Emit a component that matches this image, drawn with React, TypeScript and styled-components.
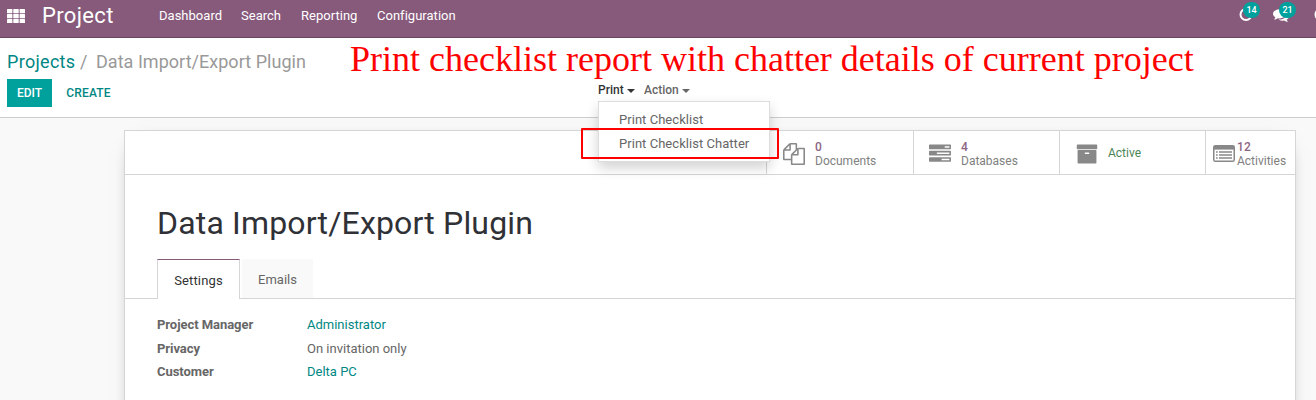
import React from "react";
import styled, { createGlobalStyle } from "styled-components";

const Global = createGlobalStyle`
  * { box-sizing: border-box; }
  html, body { margin: 0; height: 400px; overflow: hidden; }
  body { font: 13px/20px Roboto, "Liberation Sans", sans-serif; color: #666; background: #f9f9f9; }
`;
const Page = styled.div`position: relative; width: 1316px; height: 400px; overflow: hidden;`;

const Navbar = styled.header`
  display: flex; height: 38px; padding: 0 0 6px 7px; align-items: center;
  background: #875a7b; border-bottom: 1px solid #68465f; color: #fff; overflow: hidden;
`;
const Brand = styled.div`margin-left: 17px; padding-top: 1px; width: 117px; font-size: 22px; letter-spacing: 0.35px; white-space: nowrap;`;
const Menu = styled.nav`display: flex; gap: 20px; flex: 1;`;
const MenuItem = styled.span<{ $w: number }>`width: ${p => p.$w}px; white-space: nowrap; letter-spacing: 0.02px;`;
const Systray = styled.div`display: flex; width: 77px; height: 32px; align-items: center;`;
const TrayItem = styled.div<{ $w: number }>`position: relative; top: -1px; width: ${p => p.$w}px; height: 16px; flex: none;`;
const Badge = styled.span<{ $left: number }>`
  position: absolute; left: ${p => p.$left}px; top: -5px; padding: 0 3.5px; height: 16px;
  border-radius: 8px; background: #00a09d; font-size: 9px; line-height: 16px; font-weight: 500;
`;

const ControlPanel = styled.section`height: 80px; background: #fff; border-bottom: 1px solid #ccc; padding: 12px 7px 0;`;
const Breadcrumb = styled.div`display: flex; height: 25px; font-size: 18px; line-height: 24px; letter-spacing: 0.03px; color: #999; white-space: nowrap;`;
const Crumb = styled.span`color: #008784; width: 73px; letter-spacing: 0.3px;`;
const Slash = styled.span`width: 16px;`;
const Actions = styled.div`display: flex; margin-top: 4px; align-items: flex-start;`;
const Button = styled.button<{ $primary?: boolean }>`
  height: 28px; padding: 0; width: ${p => (p.$primary ? 45 : 73)}px; border: 0;
  font: 500 12px/26px Roboto, sans-serif; text-transform: uppercase; letter-spacing: ${p => (p.$primary ? 0 : 0.2)}px;
  background: ${p => (p.$primary ? "#00a09d" : "transparent")}; color: ${p => (p.$primary ? "#fff" : "#008784")};
`;
const Sidebar = styled.div`position: relative; display: flex; margin-left: 473px; margin-top: 1px; font-size: 12px; font-weight: 500;`;
const Toggle = styled.span<{ $open?: boolean }>`
  display: flex; align-items: center; width: 46px; color: ${p => (p.$open ? "#333" : "#666")};
  &::after { content: ""; margin: 2px 0 0 3px; border: 4px solid transparent; border-top-color: currentColor; border-bottom: 0; }
`;
const Dropdown = styled.div`
  position: absolute; z-index: 2; left: 0; top: 21px; width: 172px; height: 61px; padding-top: 6px;
  background: #fff; border: 1px solid #ddd; box-shadow: 0 6px 12px rgba(0,0,0,.175);
  font-size: 13px; font-weight: 400; letter-spacing: 0.04px;
`;
const Option = styled.div`height: 24px; line-height: 24px; padding-left: 20px; white-space: nowrap;`;
const Caption = styled.div`
  position: absolute; z-index: 3; left: 350px; top: 39px; white-space: nowrap;
  color: #f00; font: 36px/40px "Liberation Serif", serif;
`;
const Highlight = styled.div`position: absolute; z-index: 4; left: 581px; top: 128px; width: 198px; height: 31px; border: 2px solid #f00; border-radius: 1px;`;

const Sheet = styled.main`
  margin: 12px 0 0 124px; width: 1172px; height: 300px; background: #fff;
  border: 1px solid #d5d5d5; box-shadow: 0 5px 20px -15px #000;
`;
const Stats = styled.div`display: flex; justify-content: flex-end; height: 44px; border-bottom: 1px solid #d5d5d5;`;
const Stat = styled.div<{ $w: number; $gap: number; $pad: number }>`
  display: flex; align-items: center; width: ${p => p.$w}px; padding-left: ${p => p.$pad}px; gap: ${p => p.$gap}px;
  border-left: 1px solid #d5d5d5; color: #888; svg { flex: none; position: relative; top: 1px; }
`;
const StatText = styled.div`font-size: 12px; line-height: 14px; padding-top: 2px; color: #808080;`;
const Value = styled.div`color: #8d6584; font-weight: 500; letter-spacing: 0.2px;`;
const Active = styled.span`color: #4c8456; font-size: 12px; padding-top: 1px;`;
const Title = styled.h1`margin: 28px 0 0 32px; height: 40px; font-size: 32px; line-height: 40px; letter-spacing: 0.17px; font-weight: 400; color: #2f3136; white-space: nowrap;`;
const Tabs = styled.div`display: flex; margin-top: 16px; height: 40px; padding-left: 32px; border-bottom: 1px solid #d5d5d5;`;
const Tab = styled.div<{ $active?: boolean }>`
  width: ${p => (p.$active ? 83 : 71)}px; height: ${p => (p.$active ? 40 : 39)}px; letter-spacing: ${p => (p.$active ? 0.15 : 0)}px;
  margin-right: 2px; text-align: center; line-height: ${p => (p.$active ? 42 : 41)}px;
  color: ${p => (p.$active ? "#333" : "#666")}; background: ${p => (p.$active ? "#fff" : "#f9f9f9")};
  border: ${p => (p.$active ? "1px solid #d5d5d5" : "0")}; border-top: ${p => (p.$active ? "1px solid #875a7b" : "0")}; border-bottom: 0;
`;
const Fields = styled.dl`display: grid; grid-template-columns: 150px auto; grid-auto-rows: 23.5px; margin: 14px 0 0 32px; line-height: 24px;`;
const Label = styled.dt`font-weight: 700; letter-spacing: -0.05px;`;
const Data = styled.dd<{ $link?: boolean }>`margin: 0; color: ${p => (p.$link ? "#008784" : "#666")};`;

const Glyph = ({ d, size }: { d: string; size: number }) => (
  <svg width={size} height={size} viewBox="0 0 1792 1792" fill="currentColor"><path d={d} /></svg>
);
const files = "M1696 384q40 0 68 28t28 68v1216q0 40-28 68t-68 28h-960q-40 0-68-28t-28-68v-288h-544q-40 0-68-28t-28-68v-672q0-40 20-88t48-76l408-408q28-28 76-48t88-20h416q40 0 68 28t28 68v328q68-40 128-40h416zm-544 213l-299 299h299v-299zm-640-384l-299 299h299v-299zm196 647l316-316v-416h-384v416q0 40-28 68t-68 28h-416v640h512v-256q0-40 20-88t48-76zm956 804v-1152h-384v416q0 40-28 68t-68 28h-416v640h896z";
const tasks = "M1024 1408h640v-128h-640v128zm-384-512h1024v-128h-1024v128zm640-512h384v-128h-384v128zm512 832v256q0 26-19 45t-45 19h-1664q-26 0-45-19t-19-45v-256q0-26 19-45t45-19h1664q26 0 45 19t19 45zm0-512v256q0 26-19 45t-45 19h-1664q-26 0-45-19t-19-45v-256q0-26 19-45t45-19h1664q26 0 45 19t19 45zm0-512v256q0 26-19 45t-45 19h-1664q-26 0-45-19t-19-45v-256q0-26 19-45t45-19h1664q26 0 45 19t19 45z";
const archive = "M1088 832q0-26-19-45t-45-19h-256q-26 0-45 19t-19 45 19 45 45 19h256q26 0 45-19t19-45zm576-192v960q0 26-19 45t-45 19h-1408q-26 0-45-19t-19-45v-960q0-26 19-45t45-19h1408q26 0 45 19t19 45zm64-448v256q0 26-19 45t-45 19h-1536q-26 0-45-19t-19-45v-256q0-26 19-45t45-19h1536q26 0 45 19t19 45z";
const comments = "M1408 768q0 139-94 257t-256.5 186.5-353.5 68.5q-86 0-176-16-124 88-278 128-36 9-86 16h-3q-11 0-20.5-8t-11.5-21q-1-3-1-6.5t.5-6.5 2-6l2.5-5 3.5-5.5 4-5 4.5-5 4-4.5q5-6 23-25t26-29.5 22.5-29 25-38.5 20.5-44q-124-72-195-177t-71-224q0-139 94-257t256.5-186.5 353.5-68.5 353.5 68.5 256.5 186.5 94 257zm384 256q0 120-71 224.5t-195 176.5q10 24 20.5 44t25 38.5 22.5 29 26 29.5 23 25q1 1 4 4.5t4.5 5 4 5 3.5 5.5l2.5 5 2 6 .5 6.5-1 6.5q-3 14-13 22t-22 7q-50-7-86-16-154-40-278-128-90 16-176 16-271 0-472-132 58 4 88 4 161 0 309-45t264-129q125-92 192-212t67-254q0-77-23-152 129 71 204 178t75 230z";

const GridIcon = () => (
  <svg width="18" height="14" fill="currentColor">
    {[0, 5, 10].map(y => [0, 6.3, 12.6].map(x => <rect key={`${x}-${y}`} x={x} y={y} width="5.4" height="4.2" rx="0.5" />))}
  </svg>
);
const ListIcon = () => (
  <svg width="22" height="18" fill="none" stroke="currentColor" strokeWidth="1.5">
    <rect x="0.75" y="0.75" width="20.5" height="15.5" rx="1.6" />
    <path d="M1 1h20v3.6H1z" fill="currentColor" stroke="none" />
    <path d="M3 7h1.7M6 7h13M3 10h1.7M6 10h13M3 13h1.7M6 13h13" />
  </svg>
);
const RingIcon = () => (
  <svg width="14" height="14" fill="none" stroke="currentColor" strokeWidth="2"><circle cx="7" cy="7.5" r="5.5" /></svg>
);

export default function App() {
  return (
    <Page>
      <Global />
      <Navbar>
        <GridIcon />
        <Brand>Project</Brand>
        <Menu>
          <MenuItem $w={62}>Dashboard</MenuItem>
          <MenuItem $w={40}>Search</MenuItem>
          <MenuItem $w={56}>Reporting</MenuItem>
          <MenuItem $w={80}>Configuration</MenuItem>
        </Menu>
        <Systray>
          <TrayItem $w={34}><RingIcon /><Badge $left={4}>14</Badge></TrayItem>
          <TrayItem $w={41}><Glyph d={comments} size={16} /><Badge $left={6}>21</Badge></TrayItem>
          <TrayItem $w={14}><RingIcon /></TrayItem>
        </Systray>
      </Navbar>
      <ControlPanel>
        <Breadcrumb><Crumb>Projects</Crumb><Slash>/</Slash><span>Data Import/Export Plugin</span></Breadcrumb>
        <Actions>
          <Button $primary>Edit</Button>
          <Button>Create</Button>
          <Sidebar>
            <Toggle $open>Print</Toggle>
            <Toggle>Action</Toggle>
            <Dropdown><Option>Print Checklist</Option><Option>Print Checklist Chatter</Option></Dropdown>
          </Sidebar>
        </Actions>
      </ControlPanel>
      <Caption>Print checklist report with chatter details of current project</Caption>
      <Highlight />
      <Sheet>
        <Stats>
          <Stat $w={147} $pad={16} $gap={10}><Glyph d={files} size={22} /><StatText><Value>0</Value>Documents</StatText></Stat>
          <Stat $w={146} $pad={15} $gap={10}><Glyph d={tasks} size={22} /><StatText><Value>4</Value>Databases</StatText></Stat>
          <Stat $w={146} $pad={16} $gap={10}><Glyph d={archive} size={22} /><Active>Active</Active></Stat>
          <Stat $w={90} $pad={7} $gap={2}><ListIcon /><StatText><Value>12</Value>Activities</StatText></Stat>
        </Stats>
        <Title>Data Import/Export Plugin</Title>
        <Tabs><Tab $active>Settings</Tab><Tab>Emails</Tab></Tabs>
        <Fields>
          <Label>Project Manager</Label><Data $link>Administrator</Data>
          <Label>Privacy</Label><Data>On invitation only</Data>
          <Label>Customer</Label><Data $link>Delta PC</Data>
        </Fields>
      </Sheet>
    </Page>
  );
}
